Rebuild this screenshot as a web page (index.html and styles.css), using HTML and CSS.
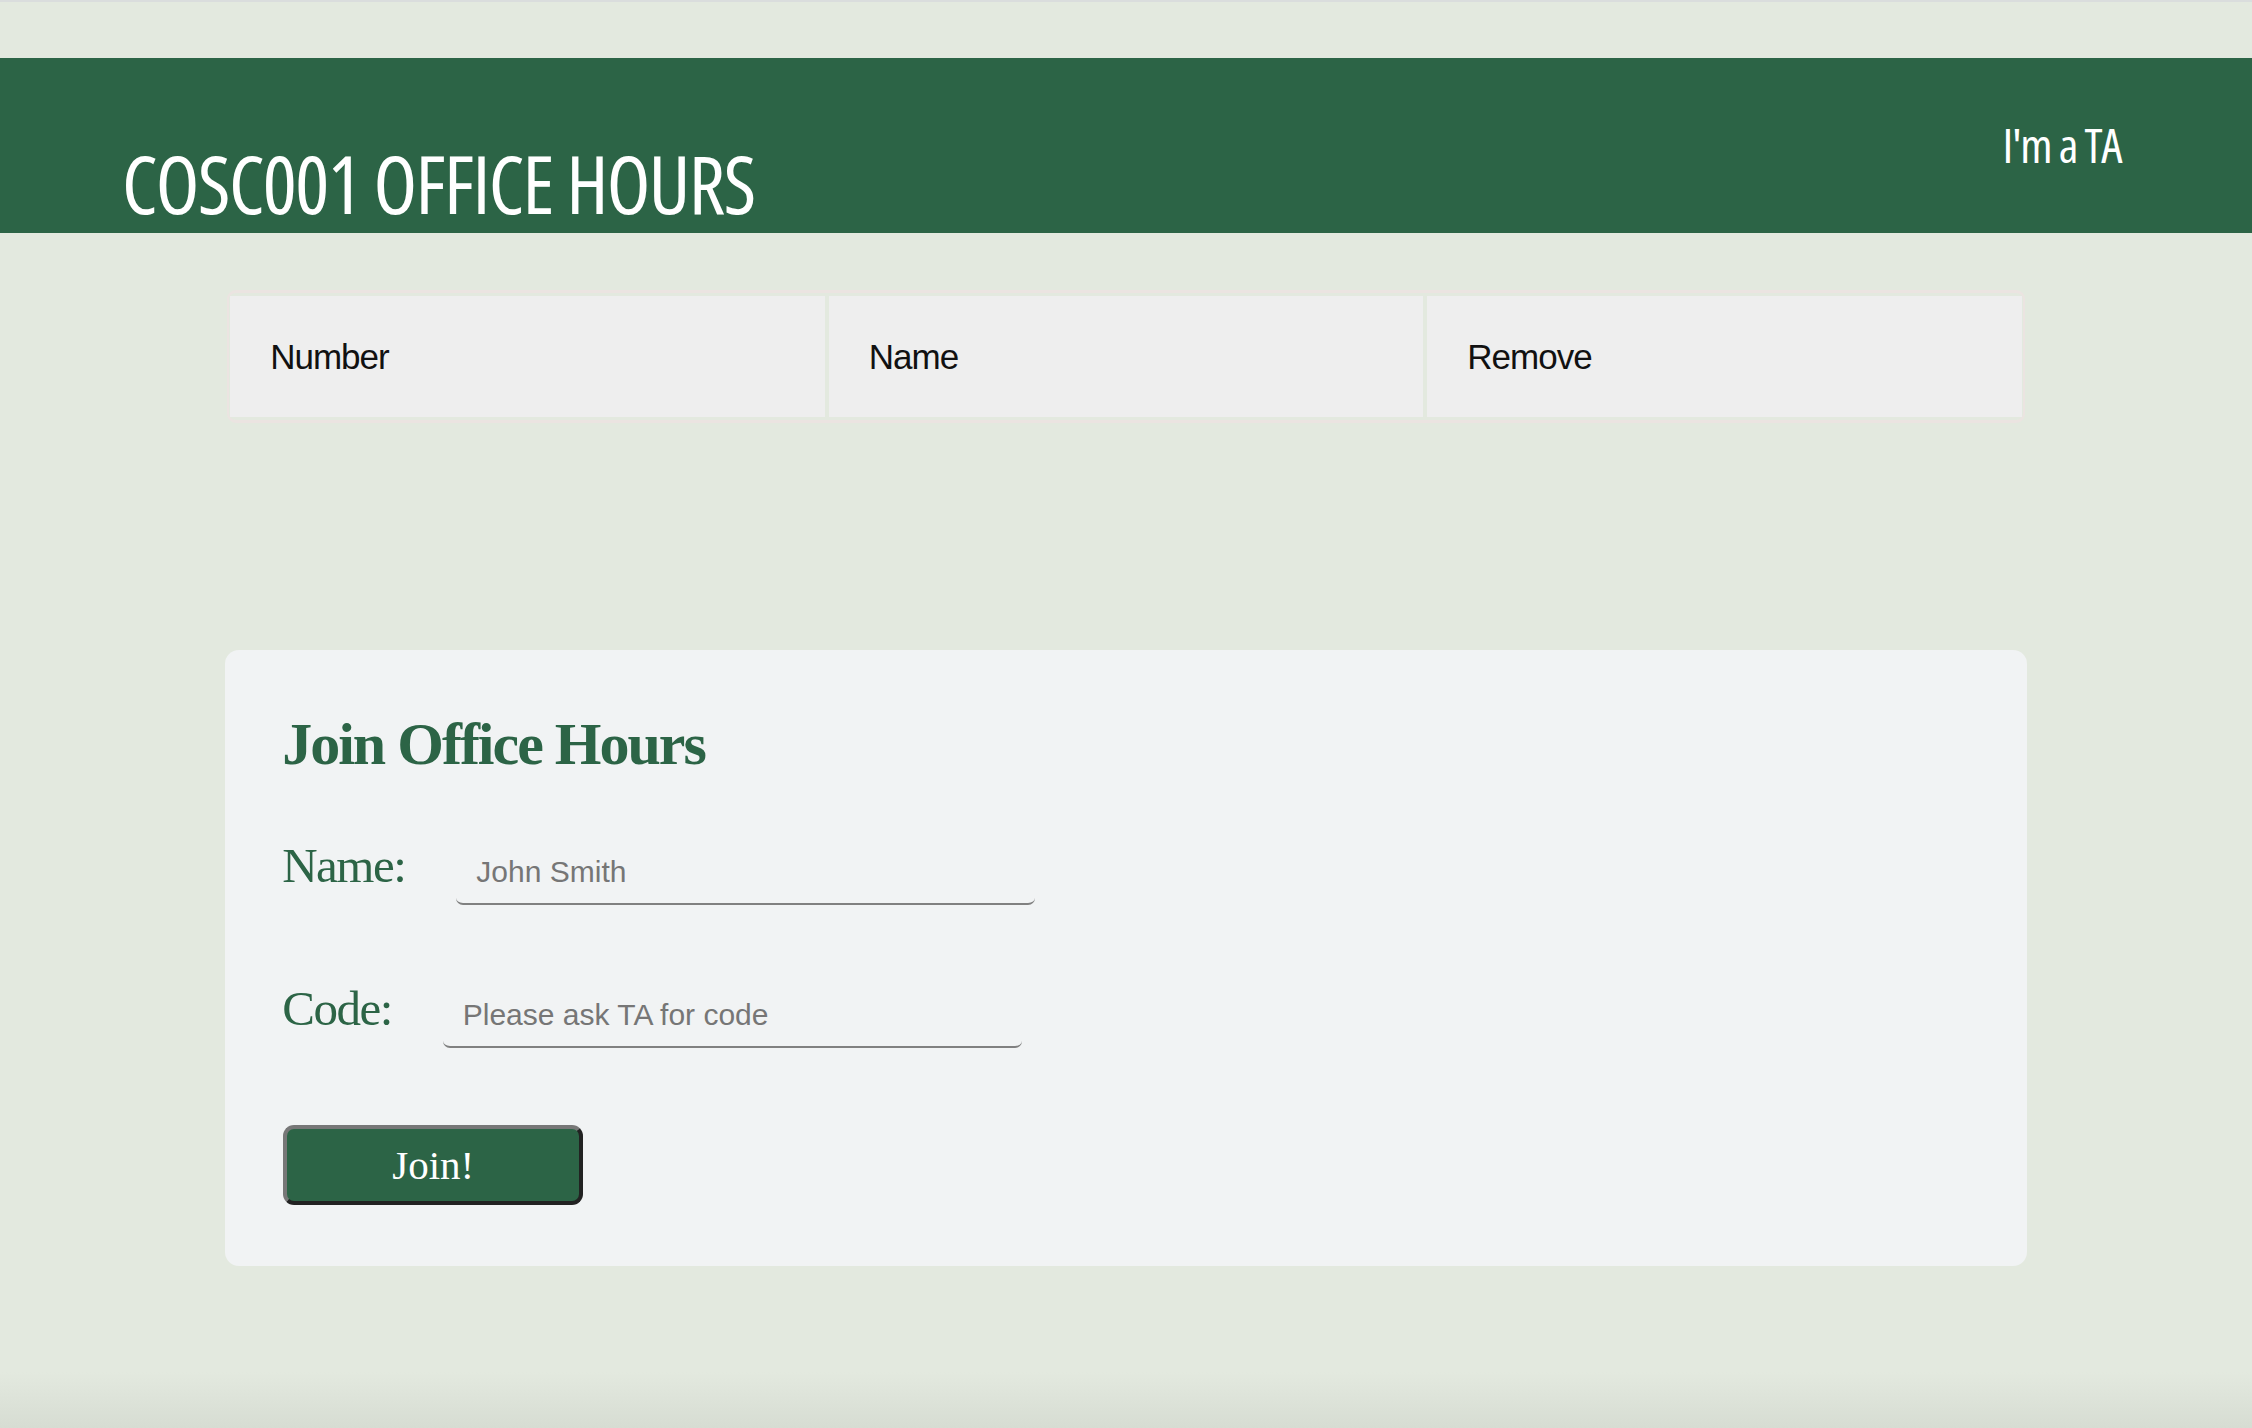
FILE: index.html
```html
<!DOCTYPE html>
<html lang="en">
<head>
<meta charset="utf-8">
<title>COSC001 Office Hours</title>
<link rel="stylesheet" href="styles.css">
</head>
<body>
<header class="topbar">
  <h1 class="brand">COSC001 OFFICE HOURS</h1>
  <nav class="nav"><a class="nav-link" href="#">I'm a TA</a></nav>
</header>
<main class="main">
  <div class="queue">
    <div class="queue-cell">Number</div>
    <div class="queue-cell">Name</div>
    <div class="queue-cell">Remove</div>
  </div>
  <section class="join-card">
    <h2 class="join-title">Join Office Hours</h2>
    <form class="join-form">
      <div class="field field--name">
        <label class="field-label" for="name">Name:</label>
        <input class="field-input" id="name" type="text" placeholder="John Smith">
      </div>
      <div class="field field--code">
        <label class="field-label" for="code">Code:</label>
        <input class="field-input" id="code" type="text" placeholder="Please ask TA for code">
      </div>
      <button class="join-btn" type="button">Join!</button>
    </form>
  </section>
</main>
</body>
</html>
```

FILE: styles.css
```css
html {
  background: #e3e9df;
}

body {
  margin: 0;
  min-height: 1428px;
  box-sizing: border-box;
  border-top: 2px solid #dadddd;
  padding-top: 56px;
  background: linear-gradient(to bottom, #e3e9df 0, #e3e9df 1370px, #d6dcd2 1428px);
  font-family: "Liberation Sans", Arial, sans-serif;
}

.topbar {
  height: 175px;
  background: #2c6446;
  display: flex;
  justify-content: space-between;
  padding: 0 131px 0 122px;
  box-sizing: border-box;
}

.brand {
  margin: 0 0 10px 0;
  align-self: flex-end;
  font-family: "Open Sans", sans-serif;
  font-stretch: 75%;
  font-weight: 500;
  font-size: 80px;
  line-height: 1;
  letter-spacing: -1.6px;
  color: #ffffff;
  white-space: nowrap;
}

.nav {
  align-self: flex-start;
  margin-top: 63px;
}

.nav-link {
  display: inline-block;
  font-family: "Open Sans", sans-serif;
  font-stretch: 75%;
  font-weight: 500;
  font-size: 48px;
  line-height: 1;
  letter-spacing: -1.4px;
  color: #ffffff;
  text-decoration: none;
  white-space: nowrap;
}

.main {
  width: 80%;
  margin: 0 auto;
  padding-top: 57px;
}

.queue {
  display: grid;
  grid-template-columns: 1fr 1fr 1fr;
  gap: 4px;
  margin: 0 2px;
  padding: 3px 1px;
  border-style: solid;
  border-color: #ebe4e1;
  border-width: 3px 2px;
  border-radius: 9px;
}

.queue-cell {
  background: #eeeeee;
  padding: 41px 40px 40px 40px;
  font-size: 35px;
  line-height: 40px;
  letter-spacing: -1px;
  color: #111111;
}

.join-card {
  margin-top: 227px;
  background: #f1f3f4;
  border-radius: 14px;
  padding: 61px 58px 61px 57px;
}

.join-title {
  margin: 0 0 60px 0;
  font-family: "Liberation Serif", "Times New Roman", serif;
  font-weight: 700;
  font-size: 60px;
  line-height: 66px;
  letter-spacing: -2px;
  color: #2c6446;
}

.join-form {
  display: flex;
  flex-direction: column;
  align-items: flex-start;
}

.field {
  display: flex;
  align-items: baseline;
  gap: 51px;
}

.field--name {
  margin-bottom: 75px;
}

.field--code {
  margin-bottom: 77px;
}

.field-label {
  font-family: "Liberation Serif", "Times New Roman", serif;
  font-size: 49px;
  letter-spacing: -1.5px;
  color: #2c6446;
}

.field-input {
  width: 579px;
  box-sizing: border-box;
  border: none;
  border-bottom: 2px solid #808080;
  border-radius: 7px;
  background: transparent;
  padding: 15px 20px 14px 20px;
  font-family: "Liberation Sans", Arial, sans-serif;
  font-size: 30px;
  color: #333333;
  outline: none;
}

.field-input::placeholder {
  color: #767676;
}

.join-btn {
  width: 300px;
  height: 80px;
  box-sizing: border-box;
  border-style: solid;
  border-width: 4px;
  border-color: #777777 #222222 #222222 #777777;
  border-radius: 11px;
  background: #2c6446;
  color: #ffffff;
  font-family: "Liberation Serif", "Times New Roman", serif;
  font-size: 41px;
  padding: 0;
  margin-left: 1px;
}
```
